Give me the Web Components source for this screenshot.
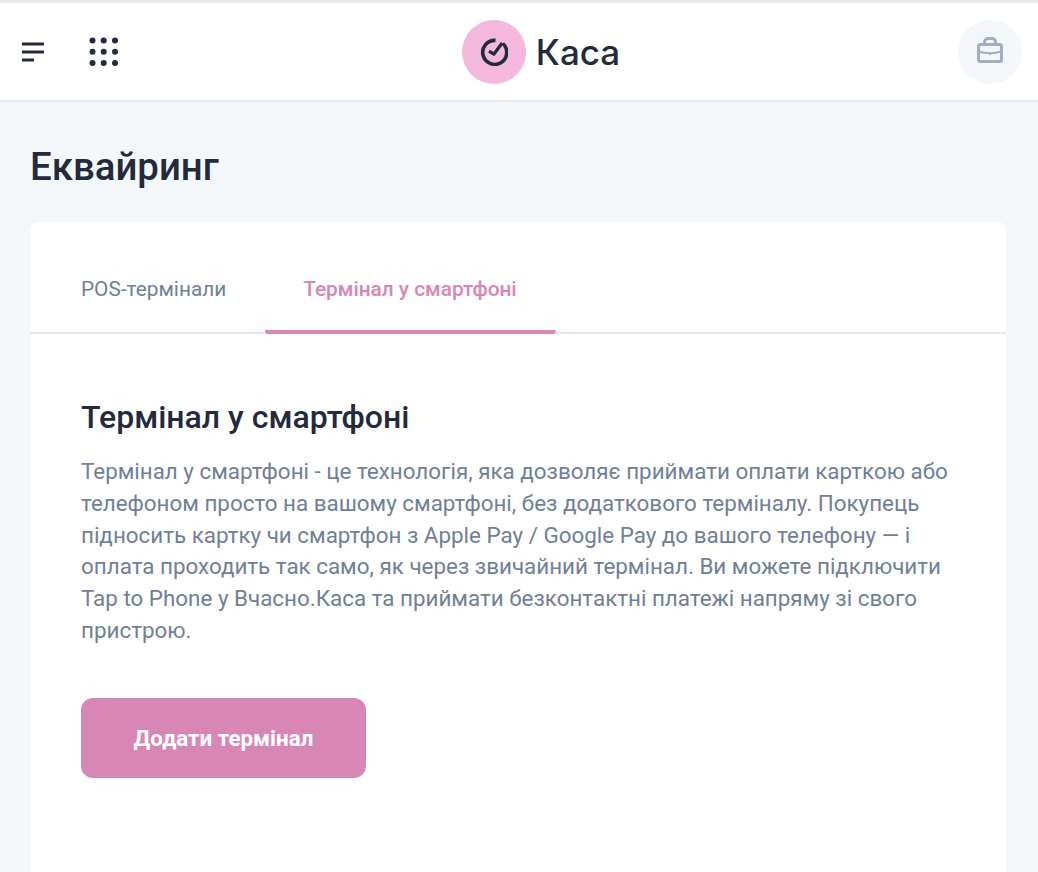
<!DOCTYPE html>
<html lang="uk">
<head>
<meta charset="utf-8">
<title>Еквайринг</title>
<style>
  html, body { margin: 0; height: 100%; }
  body {
    background: #f3f7fa;
    font-family: Roboto, "Liberation Sans", sans-serif;
    overflow: hidden;
  }
</style>
</head>
<body>
<app-header></app-header>
<page-content heading="Еквайринг">
  <tab-bar>
    <tab-item>POS-термінали</tab-item>
    <tab-item active>Термінал у смартфоні</tab-item>
  </tab-bar>
  <info-panel heading="Термінал у смартфоні" action="Додати термінал">
    Термінал у смартфоні - це технологія, яка дозволяє приймати оплати карткою або телефоном просто на вашому смартфоні, без додаткового терміналу. Покупець підносить картку чи смартфон з Apple Pay / Google Pay до вашого телефону — і оплата проходить так само, як через звичайний термінал. Ви можете підключити Tap to Phone у Вчасно.Каса та приймати безконтактні платежі напряму зі свого пристрою.
  </info-panel>
</page-content>

<script>
class AppHeader extends HTMLElement {
  constructor() {
    super();
    this.shadowDOM = this.attachShadow({mode: 'open'});
  }

  connectedCallback() {
    this.shadowDOM.innerHTML = `
      <style>
        :host {
          display: flex;
          align-items: center;
          justify-content: space-between;
          box-sizing: border-box;
          height: 101px;
          padding: 0 16px 0 22px;
          background: #fff;
          border-top: 3px solid #e9e7e8;
          border-bottom: 1px solid #e4e9ee;
          box-shadow: 0 1px 2px rgba(120, 135, 160, .10);
        }
        .left { display: flex; align-items: center; gap: 45px; width: 97px; }
        svg { display: block; }
        .logo {
          display: flex;
          align-items: center;
          gap: 10px;
          margin-left: 4px;
          font: 500 35px Inter, "Noto Sans", sans-serif;
          color: #232a3e;
        }
        .mark {
          width: 64px;
          height: 64px;
          margin-left: 1px;
          border-radius: 50%;
          background: #f4b8dc;
          display: flex;
          align-items: center;
          justify-content: center;
        }
        .cart {
          width: 64px;
          height: 64px;
          border-radius: 50%;
          background: #f3f7fa;
          display: flex;
          align-items: center;
          justify-content: center;
        }
      </style>
      <div class="left">
        <svg width="22" height="20" viewBox="0 0 22 20" fill="none" stroke="#232a3e" stroke-width="3">
          <path d="M0 2H22M0 10H22M0 18H12"/>
        </svg>
        <svg width="30" height="30" viewBox="0 0 30 30" fill="#232a3e">
          <circle cx="3.500" cy="3.500" r="3"/><circle cx="14.700" cy="3.500" r="3"/><circle cx="26" cy="3.500" r="3"/>
          <circle cx="3.500" cy="14.700" r="3"/><circle cx="14.700" cy="14.700" r="3"/><circle cx="26" cy="14.700" r="3"/>
          <circle cx="3.500" cy="26" r="3"/><circle cx="14.700" cy="26" r="3"/><circle cx="26" cy="26" r="3"/>
        </svg>
      </div>
      <div class="logo">
        <div class="mark">
          <svg width="28" height="28" viewBox="0 0 28 28" fill="none" stroke="#232a3e" stroke-width="3.600" stroke-linejoin="round">
            <path d="M15.500 2.400A12 12 0 1 0 22.800 5.500"/>
            <path d="M9 13.200L13.800 16.200L22.200 5" stroke-width="3.200"/>
          </svg>
        </div>
        <span>Каса</span>
      </div>
      <div class="cart">
        <svg width="26" height="30" viewBox="0 0 26 30" fill="none" stroke="#a3aec3" stroke-width="3" stroke-linejoin="round">
          <rect x="1.500" y="7.500" width="23" height="17" rx="2"/>
          <path d="M7.500 7V5A3.500 3.500 0 0 1 11 1.500H15A3.500 3.500 0 0 1 18.500 5V7"/>
          <path d="M1.500 14.500Q13 18 24.500 14.500" stroke-width="2.200"/>
          <path d="M13 16V18" stroke-width="2"/>
        </svg>
      </div>
    `;
  }
}

class PageContent extends HTMLElement {
  constructor() {
    super();
    this.shadowDOM = this.attachShadow({mode: 'open'});
  }

  connectedCallback() {
    this.shadowDOM.innerHTML = `
      <style>
        :host { display: block; padding: 43px 32px 0 30px; height: 771px; box-sizing: border-box; overflow: hidden; }
        h1 {
          margin: 0 0 32px;
          font: 500 38.400px/46px Roboto, sans-serif;
          color: #232a3e;
        }
        .card {
          background: #fff;
          border-radius: 8px 8px 0 0;
          height: 650px;
        }
      </style>
      <h1>${this.getAttribute('heading')}</h1>
      <div class="card"><slot></slot></div>
    `;
  }
}

class TabBar extends HTMLElement {
  constructor() {
    super();
    this.shadowDOM = this.attachShadow({mode: 'open'});
  }

  connectedCallback() {
    this.shadowDOM.innerHTML = `
      <style>
        :host {
          display: flex;
          box-sizing: border-box;
          height: 112px;
          padding-left: 13px;
          border-bottom: 2px solid #e1e7ee;
        }
      </style>
      <slot></slot>
    `;
  }
}

class TabItem extends HTMLElement {
  constructor() {
    super();
    this.shadowDOM = this.attachShadow({mode: 'open'});
  }

  connectedCallback() {
    this.shadowDOM.innerHTML = `
      <style>
        :host {
          display: flex;
          align-items: center;
          box-sizing: border-box;
          height: 112px;
          padding: 22px 39px 0 38px;
          font: 400 20.800px Roboto, sans-serif;
          color: #6f7f99;
        }
        :host([active]) {
          font-weight: 500;
          color: #d886b6;
          background: linear-gradient(#d886b6, #d886b6) bottom / 100% 4px no-repeat;
          border-radius: 0 0 3px 3px;
        }
      </style>
      <slot></slot>
    `;
  }
}

class InfoPanel extends HTMLElement {
  constructor() {
    super();
    this.shadowDOM = this.attachShadow({mode: 'open'});
  }

  connectedCallback() {
    this.shadowDOM.innerHTML = `
      <style>
        :host { display: block; padding: 63px 51px 0; }
        h2 {
          margin: 0 0 19px;
          font: 500 32px/40px Roboto, sans-serif;
          color: #232a3e;
        }
        p {
          margin: 0 0 51px;
          font: 400 22.400px/31.800px Roboto, sans-serif;
          color: #6f7f99;
        }
        button {
          display: block;
          width: 285px;
          height: 80px;
          border: 0;
          border-radius: 12px;
          background: #d886b6;
          color: #fff;
          font: 700 22.400px Roboto, sans-serif;
          cursor: pointer;
        }
      </style>
      <h2>${this.getAttribute('heading')}</h2>
      <p><slot></slot></p>
      <button type="button">${this.getAttribute('action')}</button>
    `;
  }
}

customElements.define('app-header', AppHeader);
customElements.define('page-content', PageContent);
customElements.define('tab-bar', TabBar);
customElements.define('tab-item', TabItem);
customElements.define('info-panel', InfoPanel);
</script>
</body>
</html>
